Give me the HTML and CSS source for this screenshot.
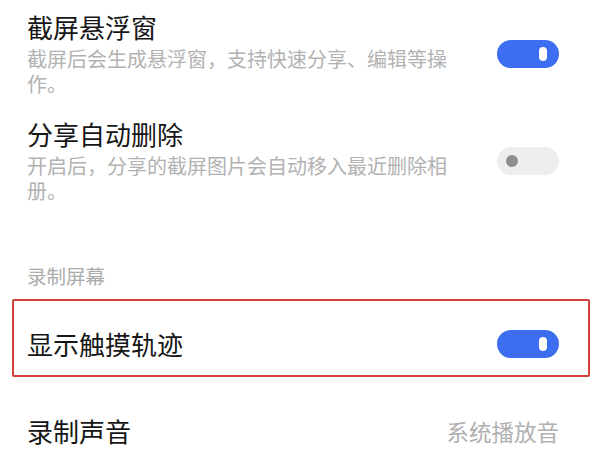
FILE: index.html
```html
<!DOCTYPE html>
<html lang="zh-CN">
<head>
<meta charset="utf-8">
<link rel="stylesheet" href="styles.css">
</head>
<body>
<div class="list">
  <div class="row row-first">
    <div class="text">
      <div class="title">截屏悬浮窗</div>
      <div class="desc">截屏后会生成悬浮窗，支持快速分享、编辑等操作。</div>
    </div>
    <div class="toggle on"><span class="knob"></span></div>
  </div>
  <div class="row row-second">
    <div class="text">
      <div class="title">分享自动删除</div>
      <div class="desc">开启后，分享的截屏图片会自动移入最近删除相册。</div>
    </div>
    <div class="toggle off"><span class="dot"></span></div>
  </div>
  <div class="section">录制屏幕</div>
  <div class="row row-highlight">
    <div class="text">
      <div class="title">显示触摸轨迹</div>
    </div>
    <div class="toggle on"><span class="knob"></span></div>
  </div>
  <div class="row row-last">
    <div class="title">录制声音</div>
    <div class="value">系统播放音</div>
  </div>
</div>
</body>
</html>
```
FILE: styles.css
```css
html, body {
  margin: 0;
  padding: 0;
  background: #ffffff;
}
body {
  font-family: "Noto Sans CJK SC", "Noto Sans", sans-serif;
  width: 600px;
  height: 458px;
  overflow: hidden;
}
.list {
  padding-top: 11px;
}
.row {
  display: flex;
  align-items: center;
  justify-content: space-between;
  padding: 0 41px 0 27px;
}
.text {
  width: 430px;
}
.title {
  font-size: 26px;
  line-height: 32px;
  color: #161616;
  white-space: nowrap;
}
.desc {
  margin-top: 3px;
  font-size: 20px;
  line-height: 25px;
  color: #b2b2b2;
}
.row-second {
  margin-top: 22px;
}
.section {
  margin-top: 60px;
  padding-left: 27px;
  font-size: 19.5px;
  line-height: 26px;
  color: #ababab;
}
.row-highlight {
  margin: 10px 10px 0 12px;
  border: 2px solid #d2413b;
  border-radius: 2px;
  padding: 27px 29px 15px 13px;
}
.row-last {
  margin-top: 38px;
}
.toggle {
  flex: none;
  width: 62px;
  height: 28px;
  border-radius: 14px;
  display: flex;
  align-items: center;
  box-sizing: border-box;
}
.toggle.on {
  background: #3d6ef2;
  justify-content: flex-end;
  padding-right: 12px;
}
.toggle.off {
  background: #eeeeee;
  padding-left: 9px;
}
.knob {
  width: 8px;
  height: 14px;
  border-radius: 4px;
  background: #ffffff;
}
.dot {
  width: 12px;
  height: 12px;
  border-radius: 50%;
  background: #8e8e8e;
}
.value {
  font-size: 22.5px;
  line-height: 32px;
  color: #b0b0b0;
  white-space: nowrap;
}
```
